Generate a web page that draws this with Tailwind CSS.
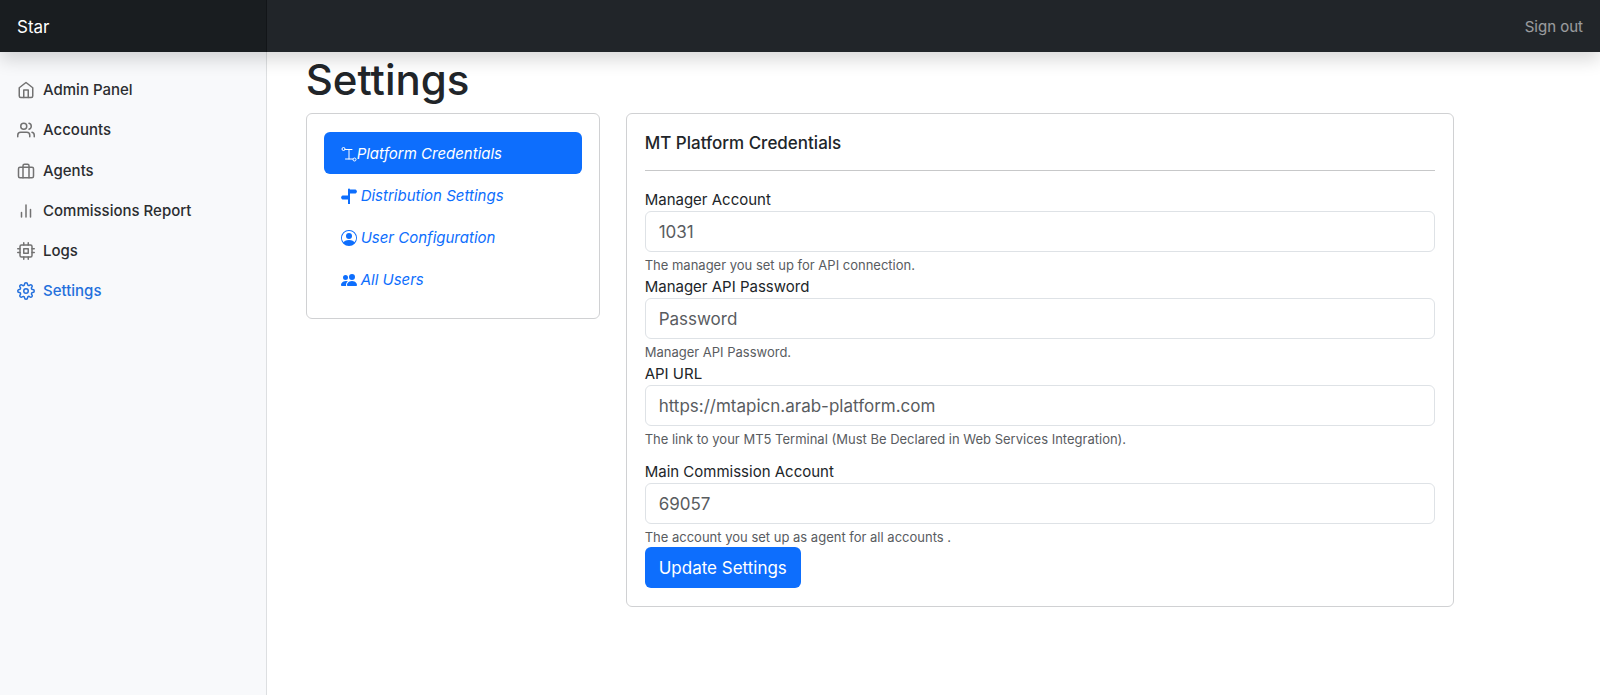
<!DOCTYPE html>
<html lang="en">
<head>
<meta charset="utf-8">
<meta name="viewport" content="width=device-width, initial-scale=1">
<title>Star – Settings</title>
<script src="https://cdn.jsdelivr.net/npm/@tailwindcss/browser@4"></script>
</head>
<body class="flex min-h-screen flex-col bg-white font-['Inter','Liberation_Sans',sans-serif] text-[15px] text-[#212529]">
<header class="relative z-10 flex h-[52px] items-stretch bg-[#212529] shadow-[0_8px_17px_rgba(0,0,0,0.15)]">
  <a href="#" class="flex w-1/6 items-center bg-[#191d20] px-[17px] pt-[3px] text-[17px] text-white shadow-[inset_-1px_0_0_rgba(0,0,0,0.25)]">Star</a>
  <a href="#" class="ml-auto flex items-center px-[17px] pt-[2px] text-[15px] text-white/55">Sign out</a>
</header>
<div class="flex flex-1">
  <nav aria-label="Main" class="w-1/6 border-r border-[#dddfe1] bg-[#f8f9fb] pt-[18px]">
    <ul class="text-[15px] font-medium leading-[22px] text-[#2b2d30]">
      <li><a href="#" class="flex items-center gap-2 px-[17px] py-[9px]">
        <svg class="size-[18px] text-[#727272]" viewBox="0 0 24 24" fill="none" stroke="currentColor" stroke-width="2" stroke-linecap="round" stroke-linejoin="round"><path d="M3 9l9-7 9 7v11a2 2 0 0 1-2 2H5a2 2 0 0 1-2-2z"/><path d="M9 22V12h6v10"/></svg>Admin Panel</a></li>
      <li><a href="#" class="flex items-center gap-2 px-[17px] py-[9px]">
        <svg class="size-[18px] text-[#727272]" viewBox="0 0 24 24" fill="none" stroke="currentColor" stroke-width="2" stroke-linecap="round" stroke-linejoin="round"><path d="M17 21v-2a4 4 0 0 0-4-4H5a4 4 0 0 0-4 4v2"/><circle cx="9" cy="7" r="4"/><path d="M23 21v-2a4 4 0 0 0-3-3.87M16 3.13a4 4 0 0 1 0 7.75"/></svg>Accounts</a></li>
      <li><a href="#" class="flex items-center gap-2 px-[17px] pt-[10px] pb-[9px]">
        <svg class="size-[18px] text-[#727272]" viewBox="0 0 24 24" fill="none" stroke="currentColor" stroke-width="2" stroke-linecap="round" stroke-linejoin="round"><rect x="2" y="7" width="20" height="14" rx="2"/><path d="M16 21V5a2 2 0 0 0-2-2h-4a2 2 0 0 0-2 2v16"/></svg>Agents</a></li>
      <li><a href="#" class="flex items-center gap-2 px-[17px] py-[9px]">
        <svg class="size-[18px] text-[#727272]" viewBox="0 0 24 24" fill="none" stroke="currentColor" stroke-width="2" stroke-linecap="round" stroke-linejoin="round"><path d="M18 20V10M12 20V4M6 20v-6"/></svg>Commissions Report</a></li>
      <li><a href="#" class="flex items-center gap-2 px-[17px] py-[9px]">
        <svg class="size-[18px] text-[#727272]" viewBox="0 0 24 24" fill="none" stroke="currentColor" stroke-width="2" stroke-linecap="round" stroke-linejoin="round"><rect x="4" y="4" width="16" height="16" rx="2"/><rect x="9" y="9" width="6" height="6"/><path d="M9 1v3M15 1v3M9 20v3M15 20v3M20 9h3M20 14h3M1 9h3M1 14h3"/></svg>Logs</a></li>
      <li><a href="#" aria-current="page" class="flex items-center gap-2 px-[17px] py-[9px] text-[#2470dc]">
        <svg class="size-[18px]" viewBox="0 0 24 24" fill="none" stroke="currentColor" stroke-width="2" stroke-linecap="round" stroke-linejoin="round"><circle cx="12" cy="12" r="3"/><path d="M19.4 15a1.65 1.65 0 0 0 .33 1.82l.06.06a2 2 0 0 1 0 2.83 2 2 0 0 1-2.83 0l-.06-.06a1.65 1.65 0 0 0-1.82-.33 1.65 1.65 0 0 0-1 1.51V21a2 2 0 0 1-2 2 2 2 0 0 1-2-2v-.09A1.65 1.65 0 0 0 9 19.4a1.65 1.65 0 0 0-1.82.33l-.06.06a2 2 0 0 1-2.83 0 2 2 0 0 1 0-2.83l.06-.06a1.65 1.65 0 0 0 .33-1.82 1.65 1.65 0 0 0-1.51-1H3a2 2 0 0 1-2-2 2 2 0 0 1 2-2h.09A1.65 1.65 0 0 0 4.6 9a1.65 1.65 0 0 0-.33-1.82l-.06-.06a2 2 0 0 1 0-2.83 2 2 0 0 1 2.83 0l.06.06a1.65 1.65 0 0 0 1.82.33H9a1.65 1.65 0 0 0 1-1.51V3a2 2 0 0 1 2-2 2 2 0 0 1 2 2v.09a1.65 1.65 0 0 0 1 1.51 1.65 1.65 0 0 0 1.82-.33l.06-.06a2 2 0 0 1 2.83 0 2 2 0 0 1 0 2.83l-.06.06a1.65 1.65 0 0 0-.33 1.82V9a1.65 1.65 0 0 0 1.51 1H21a2 2 0 0 1 2 2 2 2 0 0 1-2 2h-.09a1.65 1.65 0 0 0-1.51 1z"/></svg>Settings</a></li>
    </ul>
  </nav>
  <main class="min-w-0 flex-1 px-[39px] pb-10">
    <div class="max-w-[1148px]">
      <h1 class="mb-[7px] pt-[2px] text-[42px] font-medium leading-[52px]">Settings</h1>
      <div class="grid grid-cols-[294fr_828fr] items-start gap-[26px]">
        <nav aria-label="Settings sections" class="rounded-md border border-[#d0d1d3] px-[17px] py-[18px] italic leading-6 text-[#0d6efd]">
          <a href="#" aria-current="page" class="flex items-center rounded-md bg-[#0d6efd] px-[17px] pt-[10px] pb-2 text-white">
            <svg class="size-4" viewBox="0 0 16 16" fill="none" stroke="currentColor" stroke-width="1"><circle cx="2.500" cy="3" r="1.500"/><circle cx="13.500" cy="13.500" r="1.500"/><path d="M4 3.500h7M8 3.500v9.500M4.500 13H12" stroke-linecap="round"/></svg>Platform Credentials</a>
          <a href="#" class="flex items-center gap-1 px-[17px] pt-[10px] pb-2">
            <svg class="size-4" viewBox="0 0 16 16" fill="currentColor"><path d="M7 1.500a1 1 0 0 1 2 0h5.500a1 1 0 0 1 .800.400l.700 1.600-.700 1.600a1 1 0 0 1-.800.400H9V16H7v-4.500H1.500a1 1 0 0 1-.800-.400L0 9.500l.700-1.600a1 1 0 0 1 .800-.400H7z"/></svg>Distribution Settings</a>
          <a href="#" class="flex items-center gap-1 px-[17px] pt-[10px] pb-2">
            <svg class="size-4" viewBox="0 0 16 16" fill="currentColor"><path d="M11 6a3 3 0 1 1-6 0 3 3 0 0 1 6 0"/><path fill-rule="evenodd" d="M0 8a8 8 0 1 1 16 0A8 8 0 0 1 0 8m8-7a7 7 0 0 0-5.468 11.370C3.242 11.226 4.805 10 8 10s4.757 1.225 5.468 2.370A7 7 0 0 0 8 1"/></svg>User Configuration</a>
          <a href="#" class="flex items-center gap-1 px-[17px] pt-[10px] pb-2">
            <svg class="size-4" viewBox="0 0 16 16" fill="currentColor"><path d="M7 14s-1 0-1-1 1-4 5-4 5 3 5 4-1 1-1 1zm4-6a3 3 0 1 0 0-6 3 3 0 0 0 0 6m-5.784 6A2.240 2.240 0 0 1 5 13c0-1.355.680-2.750 1.936-3.720A6.300 6.300 0 0 0 5 9c-4 0-5 3-5 4s1 1 1 1zM4.500 8a2.500 2.500 0 1 0 0-5 2.500 2.500 0 0 0 0 5"/></svg>All Users</a>
        </nav>
        <section class="rounded-md border border-[#d0d1d3] p-[18px]">
          <h2 class="text-[17px] font-medium leading-[22px]">MT Platform Credentials</h2>
          <hr class="mt-4 mb-[17px] border-[#c7c8c9]">
          <form>
            <label for="manager" class="block leading-[23px]">Manager Account</label>
            <input id="manager" type="text" placeholder="1031" class="block h-[41px] w-full rounded-md border border-[#dee2e6] bg-white px-[13px] text-[17px] placeholder:text-[#595c5f]">
            <p class="mt-[3px] text-[13px] leading-5 text-[#595c5f]">The manager you set up for API connection.</p>
            <label for="password" class="block leading-[23px]">Manager API Password</label>
            <input id="password" type="password" placeholder="Password" class="block h-[41px] w-full rounded-md border border-[#dee2e6] bg-white px-[13px] text-[17px] placeholder:text-[#595c5f]">
            <p class="mt-[3px] text-[13px] leading-5 text-[#595c5f]">Manager API Password.</p>
            <label for="url" class="block leading-[23px]">API URL</label>
            <input id="url" type="text" placeholder="https://mtapicn.arab-platform.com" class="block h-[41px] w-full rounded-md border border-[#dee2e6] bg-white px-[13px] text-[17px] placeholder:text-[#595c5f]">
            <p class="mt-[3px] text-[13px] leading-5 text-[#595c5f]">The link to your MT5 Terminal (Must Be Declared in Web Services Integration).</p>
            <label for="commission" class="mt-[11px] block leading-[23px]">Main Commission Account</label>
            <input id="commission" type="text" placeholder="69057" class="block h-[41px] w-full rounded-md border border-[#dee2e6] bg-white px-[13px] text-[17px] placeholder:text-[#595c5f]">
            <p class="mt-[3px] text-[13px] leading-5 text-[#595c5f]">The account you set up as agent for all accounts .</p>
            <button type="submit" class="block h-[41px] rounded-md bg-[#0d6efd] px-[14px] pt-[2px] text-[17px] text-white">Update Settings</button>
          </form>
        </section>
      </div>
    </div>
  </main>
</div>
</body>
</html>
